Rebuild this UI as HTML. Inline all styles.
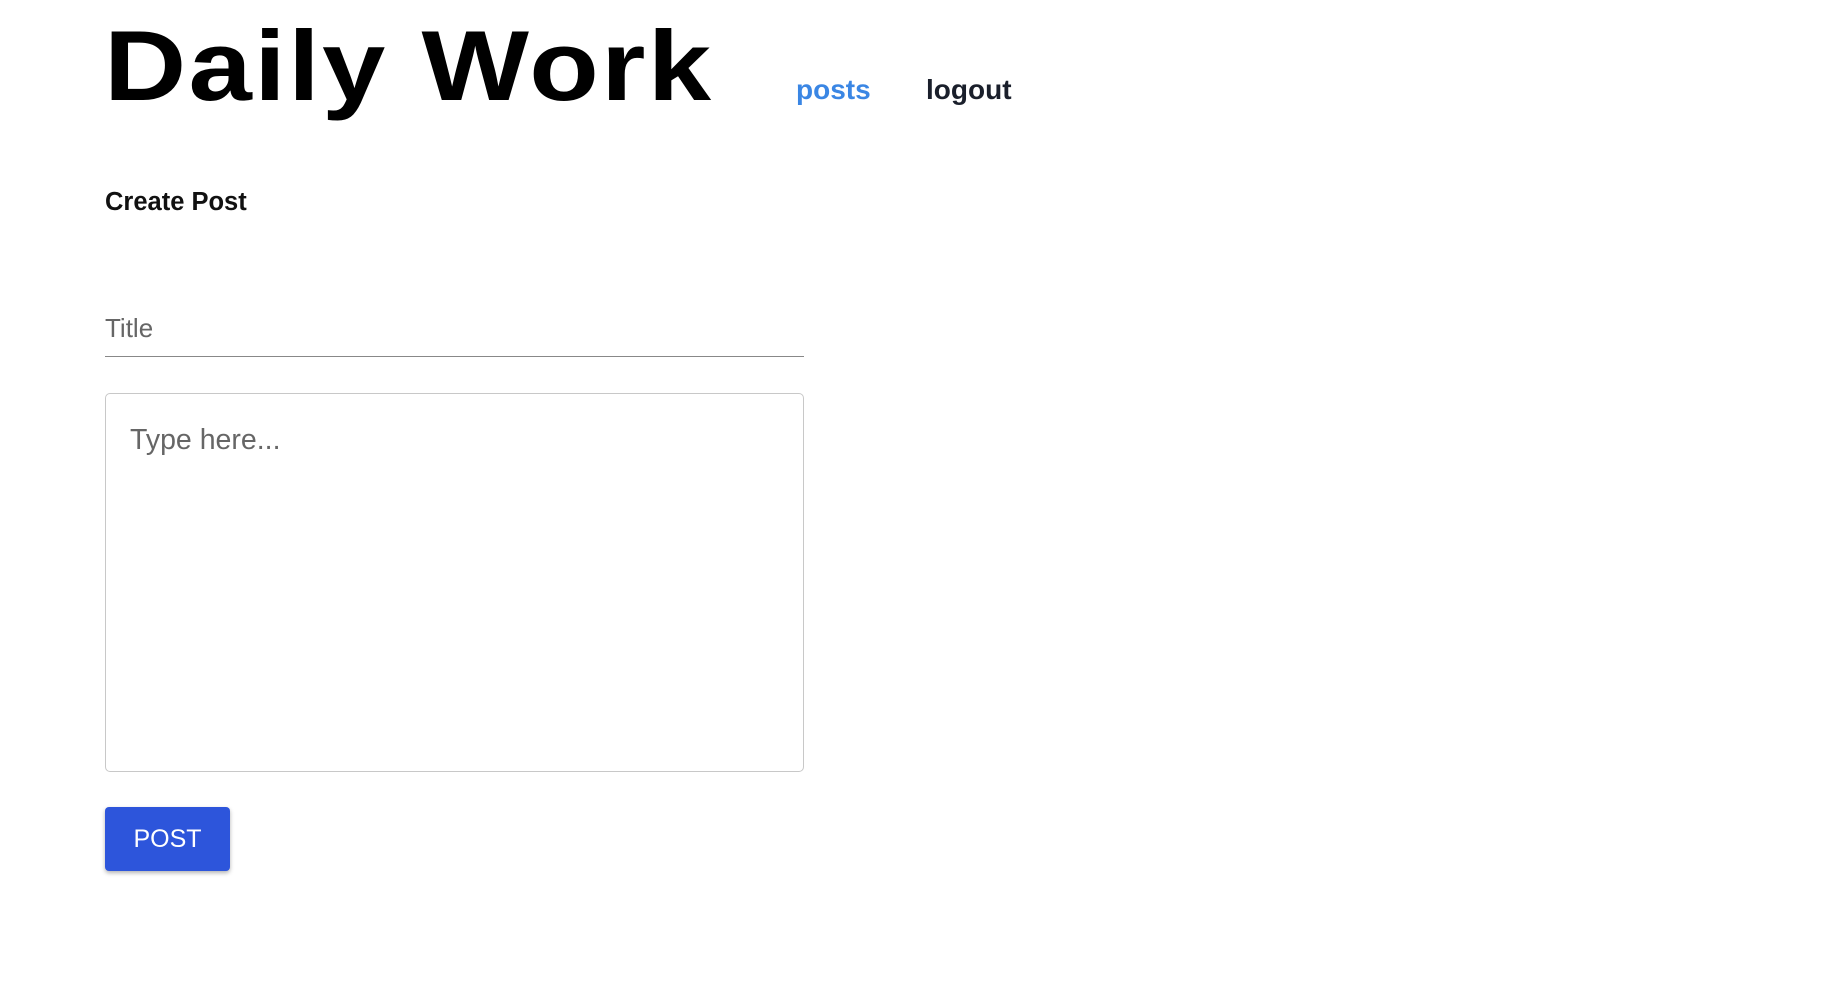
<!DOCTYPE html>
<html><head><style>
body{margin:0;background:#fff;font-family:"Liberation Sans",sans-serif;width:1835px;height:981px;overflow:hidden;position:relative}
.a{position:absolute;white-space:nowrap}
</style></head><body>
<div class="a" style="left:104px;top:9px;font-size:99px;font-weight:bold;color:#000;letter-spacing:2px;transform:scaleX(1.15);transform-origin:0 0">Daily Work</div>
<div class="a" style="left:796px;top:74px;font-size:28px;font-weight:bold;color:#3a86e4">posts</div>
<div class="a" style="left:926px;top:74px;font-size:28px;font-weight:bold;color:#1a1f2b">logout</div>
<div class="a" style="left:105px;top:188px;font-size:25.5px;font-weight:bold;color:#111">Create Post</div>
<div class="a" style="left:105px;top:313px;font-size:26px;color:#666">Title</div>
<div class="a" style="left:105px;top:356px;width:699px;height:1px;background:#888"></div>
<div class="a" style="left:105px;top:393px;width:697px;height:377px;border:1px solid #c8c8c8;border-radius:5px"></div>
<div class="a" style="left:130px;top:424px;font-size:28.5px;color:#666">Type here...</div>
<div class="a" style="left:105px;top:807px;width:125px;height:64px;background:#2d55db;border-radius:4px;box-shadow:0 2px 4px rgba(0,0,0,.3);color:#fff;font-size:25px;line-height:64px;text-align:center">POST</div>
</body></html>
